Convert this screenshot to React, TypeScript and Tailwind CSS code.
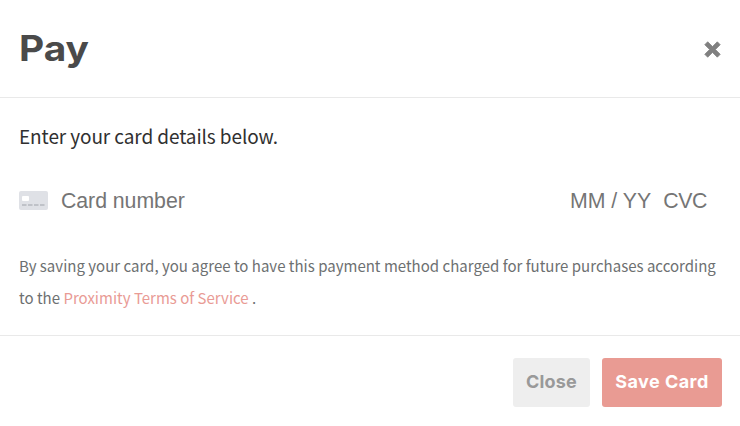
import { useState } from "react";

function CardIcon() {
  return (
    <svg width="29" height="19" viewBox="0 0 29 19" className="shrink-0">
      <rect width="29" height="19" rx="2" fill="#dfe1e6" />
      <rect x="3" y="5" width="7" height="5" rx="1" fill="#ffffff" />
      <path d="M3 14h4.5M9 14h4.5M15 14h4.5M21 14h4.5" stroke="#b5b8be" strokeWidth="1.6" />
    </svg>
  );
}

function CloseIcon() {
  return (
    <svg width="17" height="17" viewBox="0 0 17 17">
      <path
        d="M3.7 .8L8.5 5.6L13.3 .8L16.2 3.7L11.4 8.5L16.2 13.3L13.3 16.2L8.5 11.4L3.7 16.2L.8 13.3L5.6 8.5L.8 3.7Z"
        fill="#808080"
        stroke="#808080"
        strokeWidth="0.8"
        strokeLinejoin="round"
      />
    </svg>
  );
}

export default function App() {
  const [open, setOpen] = useState(true);
  if (!open) return null;

  return (
    <div className="h-[426px] w-[740px] overflow-hidden bg-white font-['Noto_Sans_CJK_SC',sans-serif]">
      <header className="flex h-[98px] items-center justify-between border-b border-[#e9e9e9] pr-[19px] pl-[19px]">
        <h1 className="mb-0.5 origin-left scale-x-[1.11] font-['Inter',sans-serif] text-[35px] leading-[48px] font-bold text-[#4a4a4a]">
          Pay
        </h1>
        <button aria-label="Close dialog" className="mt-px" onClick={() => setOpen(false)}>
          <CloseIcon />
        </button>
      </header>

      <main className="h-[237px] pt-[22px] pr-[18px] pl-[19px]">
        <p className="text-[19px] leading-8 tracking-[-0.09px] text-[#303030]">Enter your card details below.</p>
        <div className="mt-[33px] flex h-[30px] items-center font-['Liberation_Sans',sans-serif] text-[21.3px] text-[#757575]">
          <CardIcon />
          <span className="mt-[3px] ml-[13px] tracking-[-0.05px]">Card number</span>
          <span className="mt-[3px] ml-auto">MM / YY</span>
          <span className="mt-[3px] mr-[15px] ml-3 tracking-[-0.4px]">CVC</span>
        </div>
        <p className="mt-[35px] text-[15px] leading-8 whitespace-nowrap tracking-[0.01px] text-[#6d7071]">
          By saving your card, you agree to have this payment method charged for future purchases according
          <br />
          to the{" "}
          <a href="#" className="text-[#e99b95]">
            Proximity Terms of Service
          </a>{" "}
          .
        </p>
      </main>

      <footer className="flex h-[91px] justify-end gap-3 border-t border-[#e9e9e9] pt-[22px] pr-[18px] font-['Inter',sans-serif] text-[18px] font-bold">
        <button
          onClick={() => setOpen(false)}
          className="h-[49px] w-[77px] rounded-[3px] bg-[#eeeeee] pb-0.5 tracking-[0.2px] text-[#999999]"
        >
          Close
        </button>
        <button className="h-[49px] w-[120px] rounded-[3px] bg-[#e99b93] pb-0.5 tracking-[0.45px] text-white">
          Save Card
        </button>
      </footer>
    </div>
  );
}
